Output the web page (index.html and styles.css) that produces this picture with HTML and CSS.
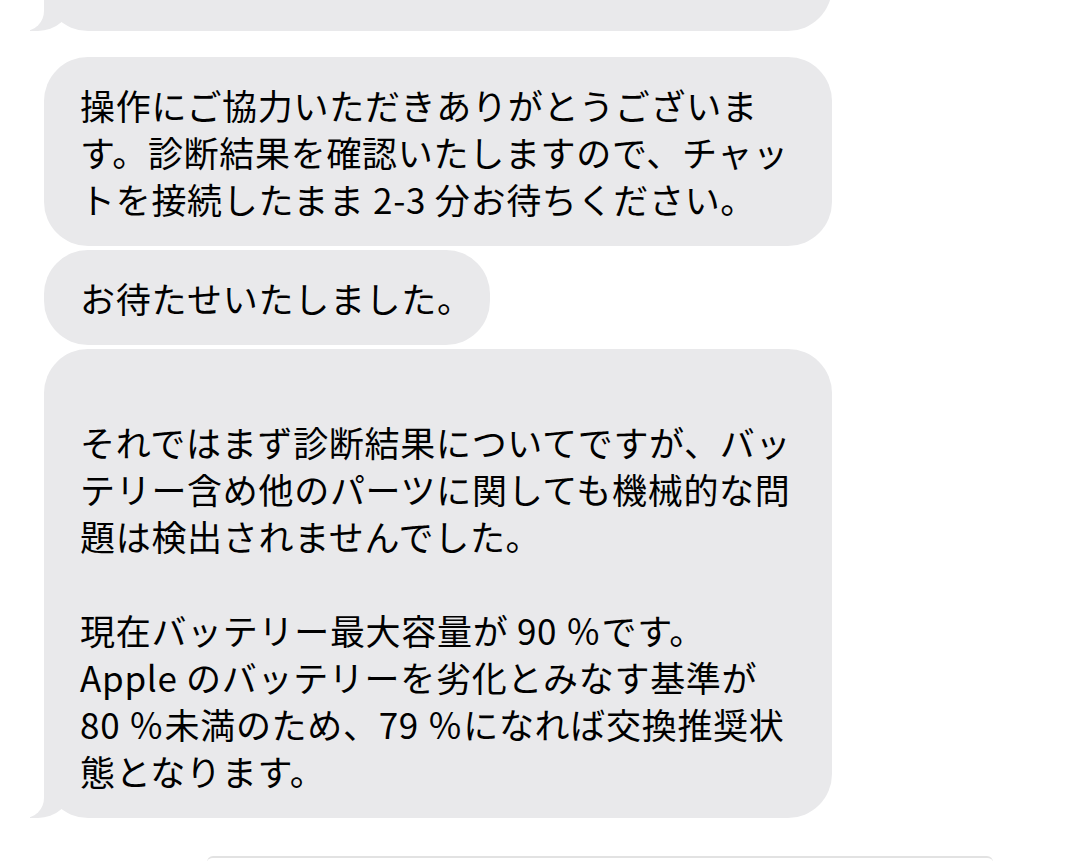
FILE: index.html
```html
<!DOCTYPE html>
<html lang="ja">
<head>
    <meta charset="UTF-8">
    <meta name="viewport" content="width=device-width, initial-scale=1.0">
    <title>Messages</title>
    <link rel="stylesheet" href="styles.css">
</head>
<body>

<div class="thread">
    <!-- previous message, scrolled mostly out of view -->
    <div class="bubble bubble-cut tail"></div>

    <div class="group">
        <div class="bubble">
            操作にご協力いただきありがとうございま<br>
            す。診断結果を確認いたしますので、チャッ<br>
            トを接続したまま 2-3 分お待ちください。
        </div>

        <div class="bubble short">お待たせいたしました。</div>

        <div class="bubble long tail">
            <br>
            それではまず診断結果についてですが、バッ<br>
            テリー含め他のパーツに関しても機械的な問<br>
            題は検出されませんでした。<br>
            <br>
            現在バッテリー最大容量が 90 ％です。<br>
            Apple のバッテリーを劣化とみなす基準が<br>
            80 ％未満のため、79 ％になれば交換推奨状<br>
            態となります。
        </div>
    </div>

    <div class="next-edge"></div>
</div>

</body>
</html>
```

FILE: styles.css
```css
body {
    margin: 0;
    background-color: #ffffff;
    font-family: "Noto Sans CJK JP", "Noto Sans", sans-serif;
    color: #000000;
    overflow: hidden;
}
.thread {
    display: flex;
    flex-direction: column;
    padding-left: 44px;
}
.group {
    display: flex;
    flex-direction: column;
    align-items: flex-start;
    gap: 4px;
    margin-top: 26px;
}
.bubble {
    position: relative;
    box-sizing: border-box;
    width: 788px;
    background-color: #e9e9eb;
    border-radius: 44px;
    padding: 24px 20px 24px 36px;
    font-size: 35px;
    letter-spacing: 0.7px;
    line-height: 47px;
    white-space: nowrap;
}
.bubble.short {
    width: auto;
    padding-right: 17px;
}
.bubble.long {
    padding-top: 22px;
}
.bubble-cut {
    height: 91px;
    margin-top: -60px;
}
/* iMessage style tail at the bottom left */
.bubble.tail::before {
    content: "";
    position: absolute;
    left: -14px;
    bottom: 0;
    width: 40px;
    height: 50px;
    background-color: #e9e9eb;
    border-bottom-right-radius: 32px 28px;
}
.bubble.tail::after {
    content: "";
    position: absolute;
    left: -52px;
    bottom: 0;
    width: 52px;
    height: 50px;
    background-color: #ffffff;
    border-bottom-right-radius: 20px;
}
.next-edge {
    margin: 38px 0 0 163px;
    width: 786px;
    height: 6px;
    border-top: 2px solid #e2e2e2;
    border-radius: 6px 6px 0 0;
}
```
